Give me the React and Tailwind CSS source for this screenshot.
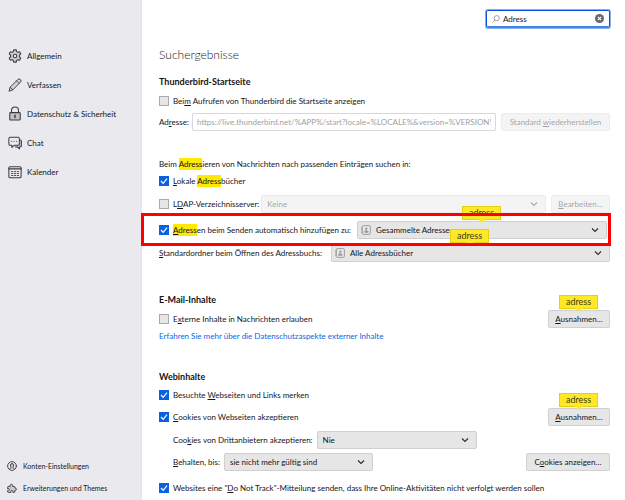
import { useState } from "react";

const U = ({ children }) => <span className="underline underline-offset-1">{children}</span>;

const Mark = ({ children }) => <mark className="bg-[#ffe900] py-px text-inherit">{children}</mark>;

function Icon({ className = "size-[14px]", children }) {
  return (
    <svg
      viewBox="0 0 16 16"
      className={`shrink-0 ${className}`}
      fill="none"
      stroke="#3c3c42"
      strokeWidth="1.2"
      strokeLinecap="round"
      strokeLinejoin="round"
      aria-hidden="true"
    >
      {children}
    </svg>
  );
}

const GearIcon = () => (
  <Icon>
    <path
      fill="#c9c9cf"
      d="M6.6 1h2.8l.5 2 1.3.7 2-.6 1.4 2.4-1.5 1.5v2l1.5 1.5-1.4 2.4-2-.6-1.3.7-.5 2H6.6l-.5-2-1.3-.7-2 .6-1.4-2.4L2.900 9V7L1.400 5.500l1.400-2.400 2 .6L6.100 3z"
    />
    <circle cx="8" cy="8" r="2" fill="#eaeaee" />
  </Icon>
);

const PencilIcon = () => (
  <Icon>
    <path fill="#d4d4da" strokeWidth="1.1" d="M1.3 14.7l1.2-4.2L11.2 1.8a1.900 1.900 0 0 1 3 3L5.500 13.500z" />
    <path strokeWidth="1" d="M9.7 3.3l3 3M2.5 10.5l3 3" />
  </Icon>
);

const LockIcon = () => (
  <Icon className="h-[15px] w-[14px]">
    <path d="M4 7V4.500a4 4 0 0 1 8 0V7" />
    <rect x="2" y="7" width="12" height="8.500" rx="1" fill="#c0c0c6" />
    <path d="M8 10v2.500" strokeWidth="1.6" />
  </Icon>
);

const ChatIcon = () => (
  <Icon>
    <path fill="#c9c9cf" d="M13 4.500h1a1.300 1.300 0 0 1 1.300 1.300v5.400a1.300 1.300 0 0 1-1.300 1.300h-1v2.200l-2.500-2.200H8.500" />
    <path
      fill="#eaeaee"
      d="M2.500 1.500h9A1.500 1.500 0 0 1 13 3v6a1.500 1.500 0 0 1-1.500 1.500H7.500L4.500 13v-2.500h-2A1.500 1.500 0 0 1 1 9V3a1.500 1.500 0 0 1 1.500-1.500z"
    />
    <path d="M4.200 6h.1M7 6h.1M9.800 6h.1" />
  </Icon>
);

const CalendarIcon = () => (
  <Icon>
    <rect x="1" y="2" width="14" height="12.500" rx="1.500" />
    <path d="M1 4.500h14" strokeWidth="1.5" />
    <path d="M4 7.500h1.500M7.300 7.500h1.500M10.600 7.500h1.500M4 9.800h1.500M7.300 9.800h1.500M10.600 9.800h1.500M4 12h1.500M7.300 12h1.500M10.600 12h1.500" strokeWidth="1" />
  </Icon>
);

const AccountIcon = () => (
  <Icon className="size-[10px]">
    <circle cx="8" cy="8" r="7" strokeWidth="1.5" />
    <path fill="#c9c9cf" strokeWidth="1.5" d="M4 13.500c0-2 2.500-2 2.500-3.500C5 8.500 5 4 8 4s3 4.500 1.500 6c0 1.500 2.500 1.500 2.500 3.500" />
  </Icon>
);

const PuzzleIcon = () => (
  <Icon className="size-[10px]">
    <path
      fill="#c9c9cf"
      strokeWidth="1.5"
      d="M1 6.500a1 1 0 0 1 1-1h3V4a2 2 0 1 1 4 0v1.500h2.500a1 1 0 0 1 1 1V8H13a2 2 0 1 1 0 4h-.5v2a1 1 0 0 1-1 1H9.300v-1.500a1.600 1.600 0 0 0-3.200 0V15H2a1 1 0 0 1-1-1v-2.200h1.300a1.500 1.500 0 0 0 0-3H1z"
    />
  </Icon>
);

function BookIcon() {
  return (
    <svg viewBox="0 0 16 16" className="pointer-events-none absolute left-1 top-1 size-[10px]" fill="none" stroke="#9a9a9f" strokeWidth="1.5" aria-hidden="true">
      <rect x="2" y="1" width="13" height="14" rx="1.500" />
      <path d="M0 4.500h3M0 8h3M0 11.500h3" />
      <circle cx="8.500" cy="6" r="1.300" fill="#9a9a9f" />
      <path d="M5.500 11.500c0-3 6-3 6 0z" fill="#9a9a9f" />
    </svg>
  );
}

function Select({ id, value, label, icon, disabled, className }) {
  return (
    <div className={`relative ${disabled ? "opacity-40" : ""} ${className}`}>
      <select
        id={id}
        aria-label={label}
        disabled={disabled}
        defaultValue={value}
        className={`block h-[18px] w-full appearance-none rounded-[2px] border border-[#cfcfd1] bg-[#e6e6e6] pr-4 leading-4 ${icon ? "pl-[18px]" : "pl-[5px]"}`}
      >
        <option>{value}</option>
      </select>
      {icon && <BookIcon />}
      <svg viewBox="0 0 8 8" className="pointer-events-none absolute right-2 top-[5px] size-2" fill="none" stroke="#2a2a30" strokeWidth="1.1" aria-hidden="true">
        <path d="M1 2.500l3 3 3-3" />
      </svg>
    </div>
  );
}

function Button({ children, disabled, className = "" }) {
  return (
    <button
      type="button"
      disabled={disabled}
      className={`h-[18px] shrink-0 whitespace-nowrap rounded-[2px] border border-[#d0d0d2] bg-[#e6e6e6] leading-4 disabled:opacity-40 ${className}`}
    >
      {children}
    </button>
  );
}

function Check({ children, checked }) {
  const [on, setOn] = useState(Boolean(checked));
  return (
    <label className="flex h-4 shrink-0 items-center gap-1 whitespace-nowrap">
      <span className="relative size-[10px] shrink-0">
        <input
          type="checkbox"
          checked={on}
          onChange={(e) => setOn(e.target.checked)}
          className="block size-[10px] appearance-none border border-[#aaaaae] bg-[#e6e6e6] checked:border-[#0a60df] checked:bg-[#0a60df]"
        />
        {on && (
          <svg viewBox="0 0 10 10" className="pointer-events-none absolute inset-0" fill="none" stroke="#fff" strokeWidth="1.2" aria-hidden="true">
            <path d="M2 5l2.200 2.300L8 2.700" />
          </svg>
        )}
      </span>
      <span>{children}</span>
    </label>
  );
}

function Tip({ className }) {
  return (
    <span className={`absolute flex h-[14px] w-[39px] items-center justify-center border border-[#e6cf10] bg-[#ffe926] text-[9px] leading-3 text-[#3c3a14] ${className}`}>
      adress
      <svg viewBox="0 0 8 4" className="absolute left-[15px] top-[12px] h-1 w-2" fill="#ffe926" aria-hidden="true">
        <path d="M0 0h8L4 4z" />
      </svg>
    </span>
  );
}

function NavItem({ icon, children }) {
  return (
    <a href="#" className="flex h-[29px] items-center gap-[5px] pl-2">
      {icon}
      {children}
    </a>
  );
}

function FootItem({ icon, children }) {
  return (
    <a href="#" className="flex h-[22px] items-center gap-[6px] pl-[7px] text-[7px]">
      {icon}
      {children}
    </a>
  );
}

const Heading = ({ children, className }) => (
  <h2 className={`h-4 text-[9px] font-bold leading-4 ${className}`}>{children}</h2>
);

export default function App() {
  return (
    <div className="flex min-h-screen bg-white font-['Lato','Noto_Sans',sans-serif] text-[8px] leading-4 text-[#15141a]">
      <aside className="flex w-[142px] shrink-0 flex-col justify-between border-r border-[#e2e2e7] bg-[#eaeaee] pb-px pt-[41px]">
        <nav>
          <NavItem icon={<GearIcon />}>Allgemein</NavItem>
          <NavItem icon={<PencilIcon />}>Verfassen</NavItem>
          <NavItem icon={<LockIcon />}>Datenschutz &amp; Sicherheit</NavItem>
          <NavItem icon={<ChatIcon />}>Chat</NavItem>
          <NavItem icon={<CalendarIcon />}>Kalender</NavItem>
        </nav>
        <nav>
          <FootItem icon={<AccountIcon />}>Konten-Einstellungen</FootItem>
          <FootItem icon={<PuzzleIcon />}>Erweiterungen und Themes</FootItem>
        </nav>
      </aside>

      <main className="min-w-0 flex-1 pl-[17px] pr-[15px] pt-[10px]">
        <div className="flex justify-end">
          <div className="flex h-[18px] w-[124px] items-center rounded-[2px] border border-b-2 border-[#0a50e0] border-b-[#3f86e6] px-[5px] ring-1 ring-[#0a60df]/50">
            <svg viewBox="0 0 8 8" className="size-2 shrink-0" fill="none" stroke="#88888d" strokeWidth="0.8" aria-hidden="true">
              <circle cx="4.800" cy="3.200" r="2.600" />
              <path d="M3 5L.5 7.500" />
            </svg>
            <input type="text" aria-label="Suche" defaultValue="Adress" className="ml-[3px] min-w-0 flex-1 bg-transparent text-[8px] outline-none" />
            <button type="button" aria-label="Löschen">
              <svg viewBox="0 0 10 10" className="size-[9px]" aria-hidden="true">
                <circle cx="5" cy="5" r="5" fill="#66666c" />
                <path d="M3.200 3.200l3.600 3.600M6.800 3.200L3.200 6.800" stroke="#fff" strokeWidth="1.2" />
              </svg>
            </button>
          </div>
        </div>

        <h1 className="mt-[17px] text-[12px] font-light leading-5 text-[#15141a]">Suchergebnisse</h1>

        <Heading className="mt-[9px]">Thunderbird-Startseite</Heading>
        <div className="mt-[3px]">
          <Check>Bei<U>m</U> Aufrufen von Thunderbird die Startseite anzeigen</Check>
        </div>
        <div className="mt-1 flex items-center">
          <label htmlFor="url" className="w-[33px] shrink-0">Ad<U>r</U>esse:</label>
          <input
            id="url"
            type="text"
            disabled
            defaultValue="https://live.thunderbird.net/%APP%/start?locale=%LOCALE%&version=%VERSION%"
            className="h-[18px] min-w-0 flex-1 rounded-[2px] border border-[#d8d8da] px-1 text-[#a0a0a4]"
          />
          <Button disabled className="ml-[5px] w-[109px]">Standard <U>w</U>iederherstellen</Button>
        </div>

        <p className="mt-[25px]">Beim <Mark>Adress</Mark>ieren von Nachrichten nach passenden Einträgen suchen in:</p>
        <div className="mt-px">
          <Check checked><U>L</U>okale <Mark>Adress</Mark>bücher</Check>
        </div>
        <div className="mt-[6px] flex items-center">
          <Check>L<U>D</U>AP-Verzeichnisserver:</Check>
          <Select label="LDAP-Verzeichnisserver" value="Keine" disabled className="ml-[2px] min-w-0 flex-1" />
          <Button disabled className="ml-[5px] w-[59px]"><U>B</U>earbeiten…</Button>
        </div>

        <div className="relative mt-2 flex items-center pr-[3px]">
          <Check checked><Mark><U>A</U>dress</Mark>en beim Senden automatisch hinzufügen zu:</Check>
          <Select label="Adressbuch für neue Adressen" value="Gesammelte Adressen" icon className="ml-[6px] min-w-0 flex-1" />
          <Tip className="-top-[15px] right-[109px]" />
          <Tip className="right-[121px] top-2" />
          <div className="pointer-events-none absolute -left-[18px] -right-px -top-2 z-10 h-[33px] border-[3px] border-[#fe0000]" />
        </div>

        <div className="mt-[5px] flex items-center">
          <label htmlFor="start" className="shrink-0"><U>S</U>tandardordner beim Öffnen des Adressbuchs:</label>
          <Select id="start" value="Alle Adressbücher" icon className="ml-[9px] min-w-0 flex-1" />
        </div>

        <Heading className="mt-[30px]">E-Mail-Inhalte</Heading>
        <div className="mt-[2px] flex items-center justify-between">
          <Check>E<U>x</U>terne Inhalte in Nachrichten erlauben</Check>
          <div className="relative flex">
            <Button className="w-[62px]"><U>A</U>usnahmen…</Button>
            <Tip className="-top-[15px] left-[11px]" />
          </div>
        </div>
        <a href="#" className="block w-fit text-[#0a68e0]">Erfahren Sie mehr über die Datenschutzaspekte externer Inhalte</a>

        <Heading className="mt-[25px]">Webinhalte</Heading>
        <div className="mt-[2px]">
          <Check checked>Besuchte <U>W</U>ebseiten und Links merken</Check>
        </div>
        <div className="mt-[5px] flex items-center justify-between">
          <Check checked><U>C</U>ookies von Webseiten akzeptieren</Check>
          <div className="relative flex">
            <Button className="w-[62px]"><U>A</U>usnahmen…</Button>
            <Tip className="-top-[15px] left-[11px]" />
          </div>
        </div>
        <div className="mt-[5px] flex items-center pl-[14px]">
          <label htmlFor="third" className="shrink-0">Coo<U>k</U>ies von Drittanbietern akzeptieren:</label>
          <Select id="third" value="Nie" className="ml-1 w-[160px]" />
        </div>
        <div className="mt-1 flex items-center pl-[14px]">
          <label htmlFor="keep" className="shrink-0"><U>B</U>ehalten, bis:</label>
          <Select id="keep" value="sie nicht mehr gültig sind" className="ml-1 w-[149px]" />
          <Button className="ml-auto w-[84px]">C<U>o</U>okies anzeigen…</Button>
        </div>
        <div className="mt-[9px]">
          <Check checked>Websites eine "<U>D</U>o Not Track"-Mitteilung senden, dass Ihre Online-Aktivitäten nicht verfolgt werden sollen</Check>
        </div>
      </main>
    </div>
  );
}
